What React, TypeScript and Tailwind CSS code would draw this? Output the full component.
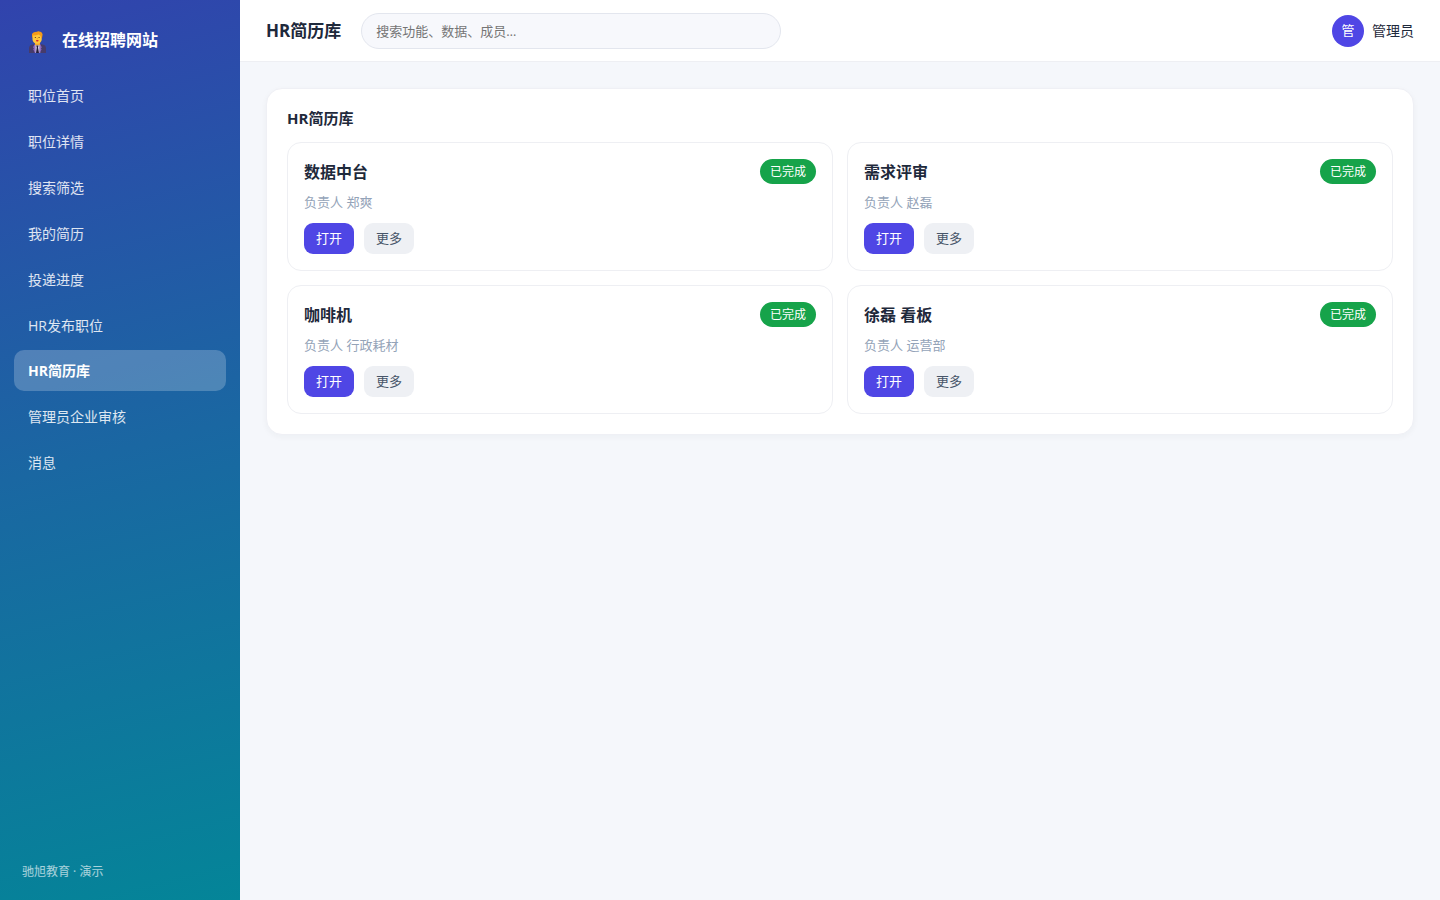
const navItems = [
  '职位首页',
  '职位详情',
  '搜索筛选',
  '我的简历',
  '投递进度',
  'HR发布职位',
  'HR简历库',
  '管理员企业审核',
  '消息',
];

const activeItem = 'HR简历库';

const cards = [
  { title: '数据中台', owner: '郑爽', status: '已完成' },
  { title: '需求评审', owner: '赵磊', status: '已完成' },
  { title: '咖啡机', owner: '行政耗材', status: '已完成' },
  { title: '徐磊 看板', owner: '运营部', status: '已完成' },
];

function OfficeWorkerIcon() {
  return (
    <svg className="h-[26px] w-[17px]" viewBox="0 -4 17 26" aria-hidden="true">
      <path d="M0 22v-4.500C0 15 1.500 13.800 4.500 13.300h8c3 .5 4.500 1.700 4.500 4.200V22z" fill="#463b6b" />
      <path d="M6 11h5v3.200l-2.500 1.500L6 14.200z" fill="#f3a72b" />
      <path d="M6.200 14.200h4.600l.4 7.800H6z" fill="#dcd6ea" />
      <path d="M7.200 14.500h2.300l-.5 2 1 5.500H7l.8-5.500z" fill="#251c3c" />
      <path d="M5.600 13 4 16.500l1 .7-.8 1L6 22h.7L6.300 15zM11.200 13l1.600 3.500-1 .7.8 1L10.800 22h-.7l.5-7z" fill="#8b69c2" />
      <path d="M3.500 4.500C3.500 2.500 5.500 1.500 8 1.500s4.700 1 4.700 3.200v3.500c0 2.600-2.200 4.600-4.600 4.600S3.500 10.800 3.500 8.200z" fill="#ffc83d" />
      <path d="M3 6.500V3.200C3.500 1.500 5 1.300 8 .8 8.600 0 9.600 0 10 .6c2 0 3.200 1.200 3.600 3L13 7h-.8L11.500 4.800 9.800 3.600 6.300 4.400 4.300 4.200 3.800 6.500z" fill="#f59b18" />
      <path d="M5.800 6h1.200v1H5.800zM9.500 6h1.200v1H9.500z" fill="#7a4f1c" />
      <path d="M7.800 6.800h.8v1.500h-.8z" fill="#f59b18" />
      <path d="M7 9h2.600l-.5 1.500H7.500z" fill="#d8232f" />
    </svg>
  );
}

function Sidebar() {
  return (
    <aside className="flex w-60 shrink-0 flex-col bg-[linear-gradient(165deg,#3143ad_0%,#1a67a2_50%,#048598_100%)] px-3.5 py-5 text-white">
      <div className="mb-3.5 flex h-10 items-center gap-4 pl-[15px]">
        <OfficeWorkerIcon />
        <span className="text-[16px] font-bold">在线招聘网站</span>
      </div>
      <nav className="flex flex-col gap-1">
        {navItems.map((item) => (
          <a
            key={item}
            href="#"
            aria-current={item === activeItem ? 'page' : undefined}
            className={
              item === activeItem
                ? 'rounded-[10px] bg-white/22 px-3.5 py-[11px] text-[14px] leading-[19px] font-bold text-white'
                : 'rounded-[10px] px-3.5 pt-3 pb-2.5 text-[14px] leading-5 text-white/85'
            }
          >
            {item}
          </a>
        ))}
      </nav>
      <div className="mt-auto px-2 text-[12px] leading-4 text-white/65">驰旭教育 · 演示</div>
    </aside>
  );
}

function Header() {
  return (
    <header className="flex h-[62px] items-center justify-between border-b border-[#eeeff3] bg-white px-[26px]">
      <div className="flex grow items-center gap-5">
        <h1 className="shrink-0 text-[17px] leading-6 font-bold">HR简历库</h1>
        <input
          type="search"
          aria-label="搜索"
          placeholder="搜索功能、数据、成员…"
          className="h-9 w-full max-w-[420px] rounded-full border border-[#e3e6ee] bg-[#f7f8fc] px-3.5 text-[13px] outline-none placeholder:text-[#757575]"
        />
      </div>
      <div className="flex shrink-0 items-center gap-2 text-[14px]">
        <span className="flex size-8 items-center justify-center rounded-full bg-[#4f46e5] text-[13px] text-white">管</span>
        <span>管理员</span>
      </div>
    </header>
  );
}

function ResumeCard({ title, owner, status }: { title: string; owner: string; status: string }) {
  return (
    <article className="rounded-[14px] border border-[#eeeff3] bg-white p-4">
      <div className="flex items-center justify-between">
        <h3 className="text-[16px] leading-6 font-bold">{title}</h3>
        <span className="rounded-full bg-[#16a34a] px-2.5 py-1 text-[12px] leading-[17px] text-white">{status}</span>
      </div>
      <p className="mt-2 text-[13px] leading-5 text-[#94a3b8]">负责人 {owner}</p>
      <div className="mt-[11px] flex gap-2.5">
        <button type="button" className="h-[31px] rounded-[9px] bg-[#4f46e5] px-3 text-[13px] text-white">
          打开
        </button>
        <button type="button" className="h-[31px] rounded-[9px] bg-[#eef0f4] px-3 text-[13px] text-[#475569]">
          更多
        </button>
      </div>
    </article>
  );
}

export default function App() {
  return (
    <div className="flex min-h-screen bg-[#f5f7fb] font-['Open_Sans','Noto_Sans_CJK_SC',sans-serif] text-[#1e293b]">
      <Sidebar />
      <div className="flex min-w-0 grow flex-col">
        <Header />
        <main className="p-[26px]">
          <section className="rounded-2xl border border-[#eff0f5] bg-white p-5 shadow-[0_2px_6px_rgba(30,41,59,0.04)]">
            <h2 className="mb-3.5 text-[15px] leading-[19px] font-bold">HR简历库</h2>
            <div className="grid grid-cols-2 gap-3.5">
              {cards.map((card) => (
                <ResumeCard key={card.title} {...card} />
              ))}
            </div>
          </section>
        </main>
      </div>
    </div>
  );
}
